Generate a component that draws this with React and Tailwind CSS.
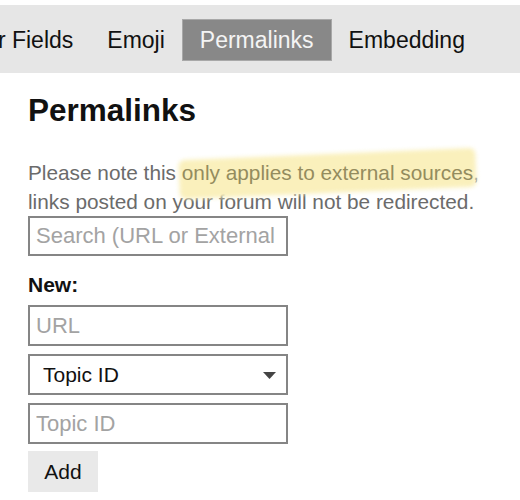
import React, { useState } from "react";

const tabs = ["User Fields", "Emoji", "Permalinks", "Embedding"];

const App = () => {
  const [kind, setKind] = useState("topic_id");

  return (
    <div className="w-[520px] h-[500px] overflow-hidden bg-white pt-[5px] font-['Liberation_Sans',Arial,sans-serif]">
      {/* admin nav */}
      <div className="h-[68px] bg-[#e6e6e6] flex items-start pt-[14px] overflow-hidden">
        <div className="flex ml-[-60px] shrink-0">
          {tabs.map((t) => (
            <div
              key={t}
              className={
                t === "Permalinks"
                  ? "h-[42px] px-[17px] flex items-center text-[23px] whitespace-nowrap bg-[#888888] text-[#f4f4f4] border border-[#a8a8a8]"
                  : "h-[42px] px-[17px] flex items-center text-[23px] whitespace-nowrap text-[#111]"
              }
            >
              {t}
            </div>
          ))}
        </div>
      </div>

      <div className="px-[28px]">
        <h2 className="mt-[19px] text-[31.5px] leading-[36px] font-bold text-[#111]">Permalinks</h2>

        <p className="mt-[30px] text-[20.8px] leading-[29px] text-[#6b6b6b] whitespace-nowrap">
          Please note this{" "}
          <span className="relative inline-block">
            <span className="absolute left-[-3px] right-[-3px] top-[-4px] bottom-[-6px] bg-[#faf0bc] rounded-md -rotate-[2.4deg] blur-[2px]" />
            <span className="relative text-[#948c5e]">only applies to external sources</span>
          </span>
          ,
          <br />
          links posted on your forum will not be redirected.
        </p>

        <input
          type="text"
          placeholder="Search (URL or External"
          className="block w-[260px] h-[40px] border-2 border-[#858585] px-[6px] text-[22px] text-[#222] placeholder:text-[#a3a3a3] outline-none"
        />

        <div className="mt-[17px] text-[21px] leading-[24px] font-bold text-[#111]">New:</div>

        <div className="mt-[8px] flex flex-col gap-[8px] w-[260px]">
          <input
            type="text"
            placeholder="URL"
            className="block w-full h-[41px] border-2 border-[#858585] px-[6px] text-[22px] text-[#222] placeholder:text-[#a3a3a3] outline-none"
          />
          <div className="relative">
            <select
              value={kind}
              onChange={(e) => setKind(e.target.value)}
              className="block w-full h-[41px] border-2 border-[#858585] pl-[13px] pr-[30px] text-[21px] text-[#111] bg-white appearance-none outline-none"
            >
              <option value="topic_id">Topic ID</option>
              <option value="post_id">Post ID</option>
              <option value="category_id">Category ID</option>
              <option value="external_url">External URL</option>
            </select>
            <svg
              className="absolute right-[12px] top-[18px] pointer-events-none"
              width="13"
              height="7"
              viewBox="0 0 13 7"
            >
              <path d="M0 0 H13 L6.5 7 Z" fill="#444" />
            </svg>
          </div>
          <input
            type="text"
            placeholder="Topic ID"
            className="block w-full h-[41px] border-2 border-[#858585] px-[6px] text-[22px] text-[#222] placeholder:text-[#a3a3a3] outline-none"
          />
        </div>

        <button
          type="button"
          className="mt-[7px] w-[70px] h-[41px] bg-[#e9e9e9] text-[21px] text-[#111]"
        >
          Add
        </button>
      </div>
    </div>
  );
};

export default App;
